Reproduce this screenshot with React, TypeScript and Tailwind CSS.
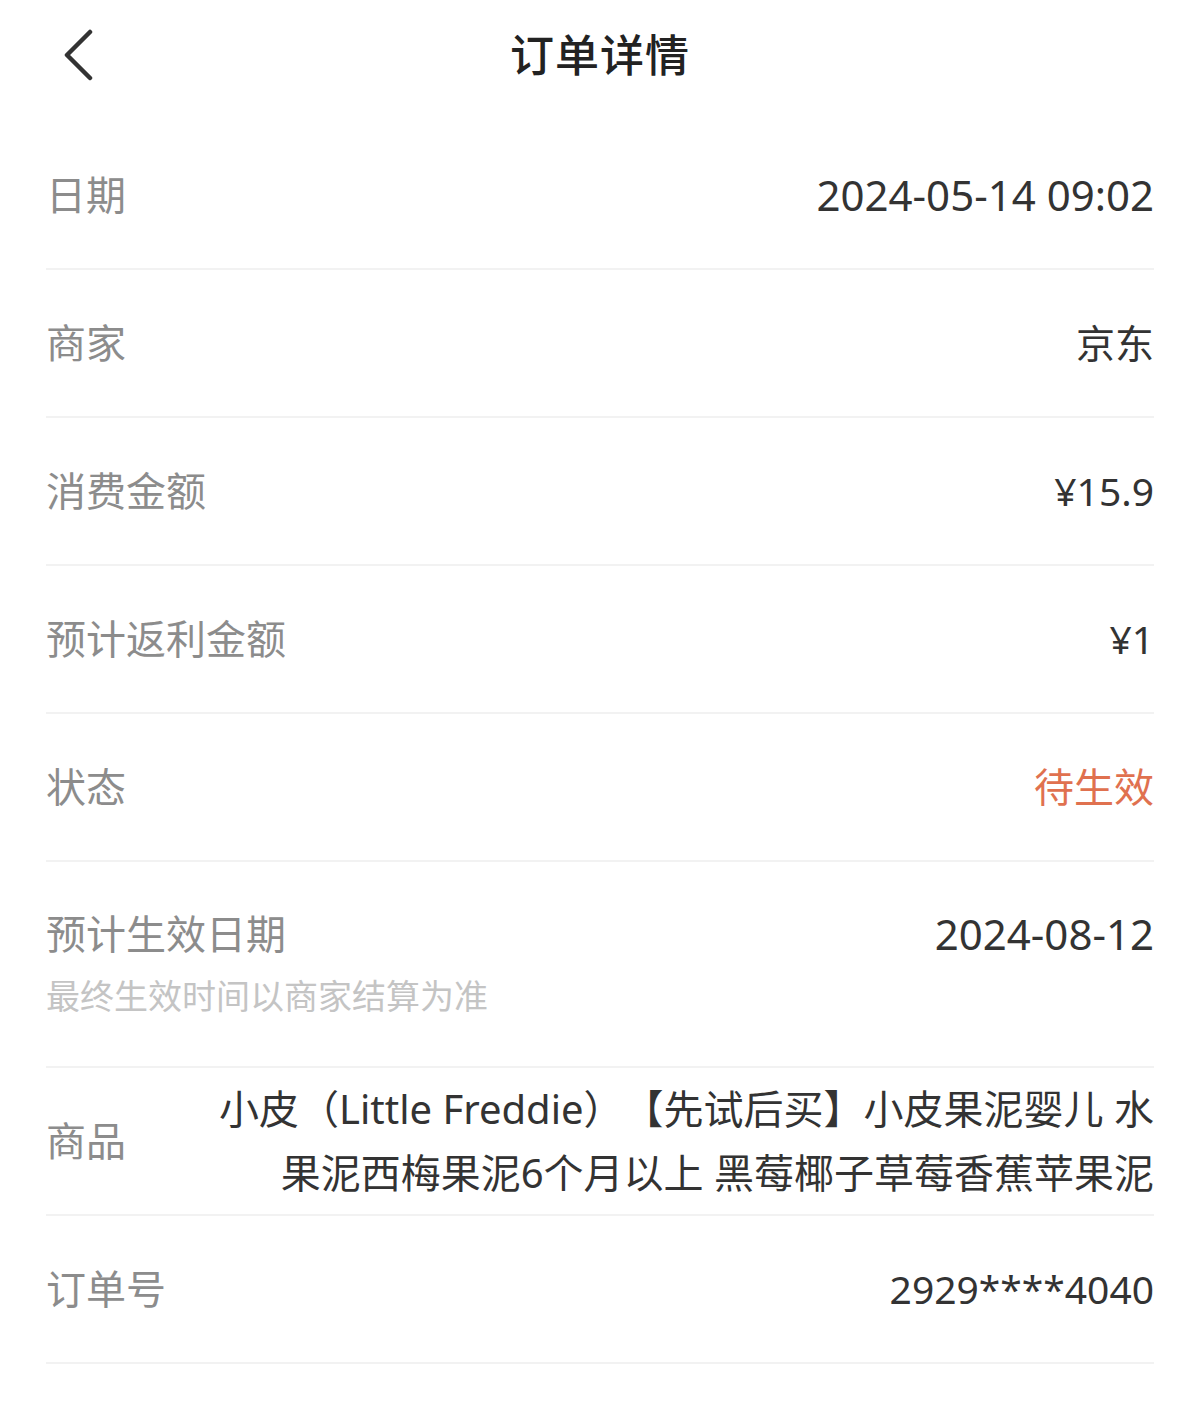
const font = "font-['Noto_Sans','Noto_Sans_CJK_SC',sans-serif]"

type Row = {
  label: string
  value: string
  size: string
  tone?: 'accent'
  note?: string
}

const rows: Row[] = [
  { label: '日期', value: '2024-05-14 09:02', size: 'text-[42px]' },
  { label: '商家', value: '京东', size: 'text-[39px]' },
  { label: '消费金额', value: '¥15.9', size: 'text-[39px]' },
  { label: '预计返利金额', value: '¥1', size: 'text-[39px]' },
  { label: '状态', value: '待生效', size: 'text-[40px]', tone: 'accent' },
  {
    label: '预计生效日期',
    value: '2024-08-12',
    size: 'text-[42px]',
    note: '最终生效时间以商家结算为准',
  },
]

function DetailRow({ row }: { row: Row }): React.ReactElement {
  return (
    <div
      className={`flex justify-between border-b-2 border-[#f2f2f2] ${
        row.note ? 'h-[206px] pt-[50px]' : 'h-[148px] items-center'
      }`}
    >
      <div className="flex flex-col">
        <span className="text-[40px] leading-[44px] text-[#8c8c8c]">{row.label}</span>
        {row.note && (
          <span className="mt-[20px] text-[34px] leading-[40px] text-[#c4c4c4]">{row.note}</span>
        )}
      </div>
      <span
        className={`${row.size} leading-[44px] ${
          row.tone === 'accent' ? 'text-[#e0714f]' : 'text-[#333333]'
        }`}
      >
        {row.value}
      </span>
    </div>
  )
}

function App(): React.ReactElement {
  return (
    <div className={`min-h-screen bg-white ${font}`}>
      <header className="relative flex h-[110px] items-center justify-center">
        <button className="absolute left-[56px] top-[20px] p-2">
          <svg width="30" height="54" viewBox="0 0 30 54" fill="none">
            <path
              d="M26 4 L3 27 L26 50"
              stroke="#333333"
              strokeWidth="4.5"
              strokeLinecap="round"
              strokeLinejoin="round"
            />
          </svg>
        </button>
        <h1 className="text-[44px] font-medium tracking-[1px] text-[#222222]">订单详情</h1>
      </header>

      <main className="mt-[12px] px-[46px]">
        {rows.map((row) => (
          <DetailRow key={row.label} row={row} />
        ))}

        <div className="flex h-[148px] items-center justify-between border-b-2 border-[#f2f2f2]">
          <span className="shrink-0 text-[40px] leading-[44px] text-[#8c8c8c]">商品</span>
          <div className="flex flex-col items-end text-right text-[40px] leading-[64px] text-[#333333] [text-spacing-trim:space-all]">
            <span>小皮（Little Freddie）【先试后买】小皮果泥婴儿 水</span>
            <span>果泥西梅果泥6个月以上 黑莓椰子草莓香蕉苹果泥</span>
          </div>
        </div>

        <div className="flex h-[148px] items-center justify-between border-b-2 border-[#f2f2f2]">
          <span className="text-[40px] leading-[44px] text-[#8c8c8c]">订单号</span>
          <span className="text-[39px] leading-[44px] text-[#333333]">2929****4040</span>
        </div>
      </main>
    </div>
  )
}

export default App
